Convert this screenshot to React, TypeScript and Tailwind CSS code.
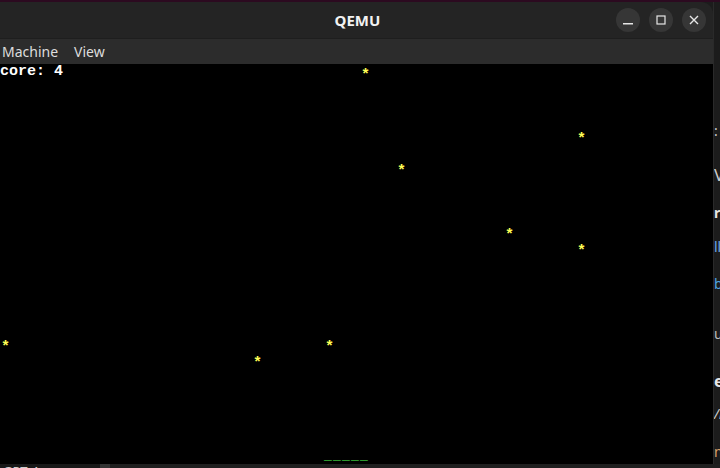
import React from 'react'

type Cell = { row: number; col: number; text: string; color: 'white' | 'yellow' | 'green' }

const cells: Cell[] = [
  { row: 0, col: 0, text: 'core: 4', color: 'white' },
  { row: 0, col: 40, text: '*', color: 'yellow' },
  { row: 4, col: 64, text: '*', color: 'yellow' },
  { row: 6, col: 44, text: '*', color: 'yellow' },
  { row: 10, col: 56, text: '*', color: 'yellow' },
  { row: 11, col: 64, text: '*', color: 'yellow' },
  { row: 17, col: 0, text: '*', color: 'yellow' },
  { row: 17, col: 36, text: '*', color: 'yellow' },
  { row: 18, col: 28, text: '*', color: 'yellow' },
  { row: 24, col: 36, text: '_____', color: 'green' },
]

// partly hidden text of the editor behind the window
const sideText = [
  { h: 'h-[120px]', text: '', cls: '' },
  { h: 'h-[44px]', text: ':', cls: 'text-[#cccccc]' },
  { h: 'h-[38px]', text: 'Vh', cls: 'text-[#cccccc] text-[17px]' },
  { h: 'h-[34px]', text: 're', cls: 'text-[#e6e6e6] font-bold' },
  { h: 'h-[37px]', text: 'll', cls: 'text-[#6aa7e8]' },
  { h: 'h-[50px]', text: 'bl', cls: 'text-[#4fa3e0]' },
  { h: 'h-[47px]', text: 'u', cls: 'text-[#bbbbbb]' },
  { h: 'h-[33px]', text: 'e', cls: 'text-[#e6e6e6] font-bold text-[16px]' },
  { h: 'h-[38px]', text: '/i', cls: 'text-[#cccccc] italic' },
  { h: 'h-[20px]', text: 'n', cls: 'text-[#d7a16a]' },
]

function Glyph({ cell }: { cell: Cell }) {
  if (cell.color === 'yellow') {
    return <span className="inline-block w-[9px] translate-y-[4px] translate-x-[1px] text-[#ffff55]">*</span>
  }
  if (cell.color === 'green') {
    return (
      <>
        {cell.text.split('').map((c, i) => (
          <span key={i} className="inline-block w-[9px] text-[13px] text-[#55ff55]">
            {c}
          </span>
        ))}
      </>
    )
  }
  return <span className="text-white">{cell.text}</span>
}

function Row({ row }: { row: number }) {
  const items = cells.filter((c) => c.row === row).sort((a, b) => a.col - b.col)
  let pos = 0
  const out: React.ReactNode[] = []
  items.forEach((c, i) => {
    if (c.col > pos) out.push(<span key={'s' + i}>{' '.repeat(c.col - pos)}</span>)
    out.push(<Glyph key={i} cell={c} />)
    pos = c.col + c.text.length
  })
  return <div className="h-[16px] whitespace-pre">{out}</div>
}

function WinButton({ children }: { children: React.ReactNode }) {
  return (
    <div className="w-[24px] h-[24px] rounded-full bg-[#363636] flex items-center justify-center">
      {children}
    </div>
  )
}

export default function App() {
  return (
    <div className="w-[720px] h-[468px] overflow-hidden flex flex-col bg-[#1c1c1c]">
      <div className="h-[2px] bg-[#2c0a20]" />
      <div className="flex h-[462px]">
        <div className="w-[713px] flex flex-col rounded-tr-[12px] overflow-hidden bg-[#242424]">
          <div className="h-[36px] flex items-center relative font-['Noto_Sans',sans-serif]">
            <div className="flex-1 text-center pl-[2px] text-[15px] font-bold text-[#f2f2f2]">QEMU</div>
            <div className="absolute right-[7px] top-[6px] flex gap-[9px]">
              <WinButton>
                <svg width="10" height="10" viewBox="0 0 10 10">
                  <rect x="0" y="8" width="10" height="1.5" fill="#e6e6e6" />
                </svg>
              </WinButton>
              <WinButton>
                <svg width="10" height="10" viewBox="0 0 10 10">
                  <rect x="1" y="1" width="8" height="8" fill="none" stroke="#e6e6e6" strokeWidth="1.2" />
                </svg>
              </WinButton>
              <WinButton>
                <svg width="10" height="10" viewBox="0 0 10 10">
                  <path d="M1 1 L9 9 M9 1 L1 9" stroke="#e6e6e6" strokeWidth="1.4" />
                </svg>
              </WinButton>
            </div>
          </div>
          <div className="h-[26px] bg-[#2c2c2c] border-t border-[#1e1e1e] flex items-center gap-[16px] pl-[2px] text-[14px] text-[#dddddd] font-['Noto_Sans',sans-serif]">
            <span>Machine</span>
            <span>View</span>
          </div>
          <div className="h-[400px] bg-black font-['Liberation_Mono',monospace] font-bold text-[15px] leading-[16px] overflow-hidden">
            {Array.from({ length: 25 }, (_, r) => (
              <Row key={r} row={r} />
            ))}
          </div>
        </div>
        <div className="w-[7px] border-l border-[#2a2a2a] bg-[#1c1c1c] overflow-hidden flex flex-col font-['Noto_Sans',sans-serif] text-[14px] leading-[18px]">
          {sideText.map((s, i) => (
            <div key={i} className={`${s.h} whitespace-nowrap ${s.cls}`}>
              {s.text}
            </div>
          ))}
        </div>
      </div>
      <div className="h-[4px] flex overflow-hidden bg-[#181818]">
        <div className="w-[100px] pl-[3px] overflow-hidden">
          <div className="text-[13px] leading-[13px] text-[#cccccc] font-['Noto_Sans',sans-serif] pt-[1px]">GPT-4o</div>
        </div>
        <div className="w-[10px] bg-[#333333]" />
        <div className="flex-1 bg-[#1f1f1f]" />
      </div>
    </div>
  )
}
